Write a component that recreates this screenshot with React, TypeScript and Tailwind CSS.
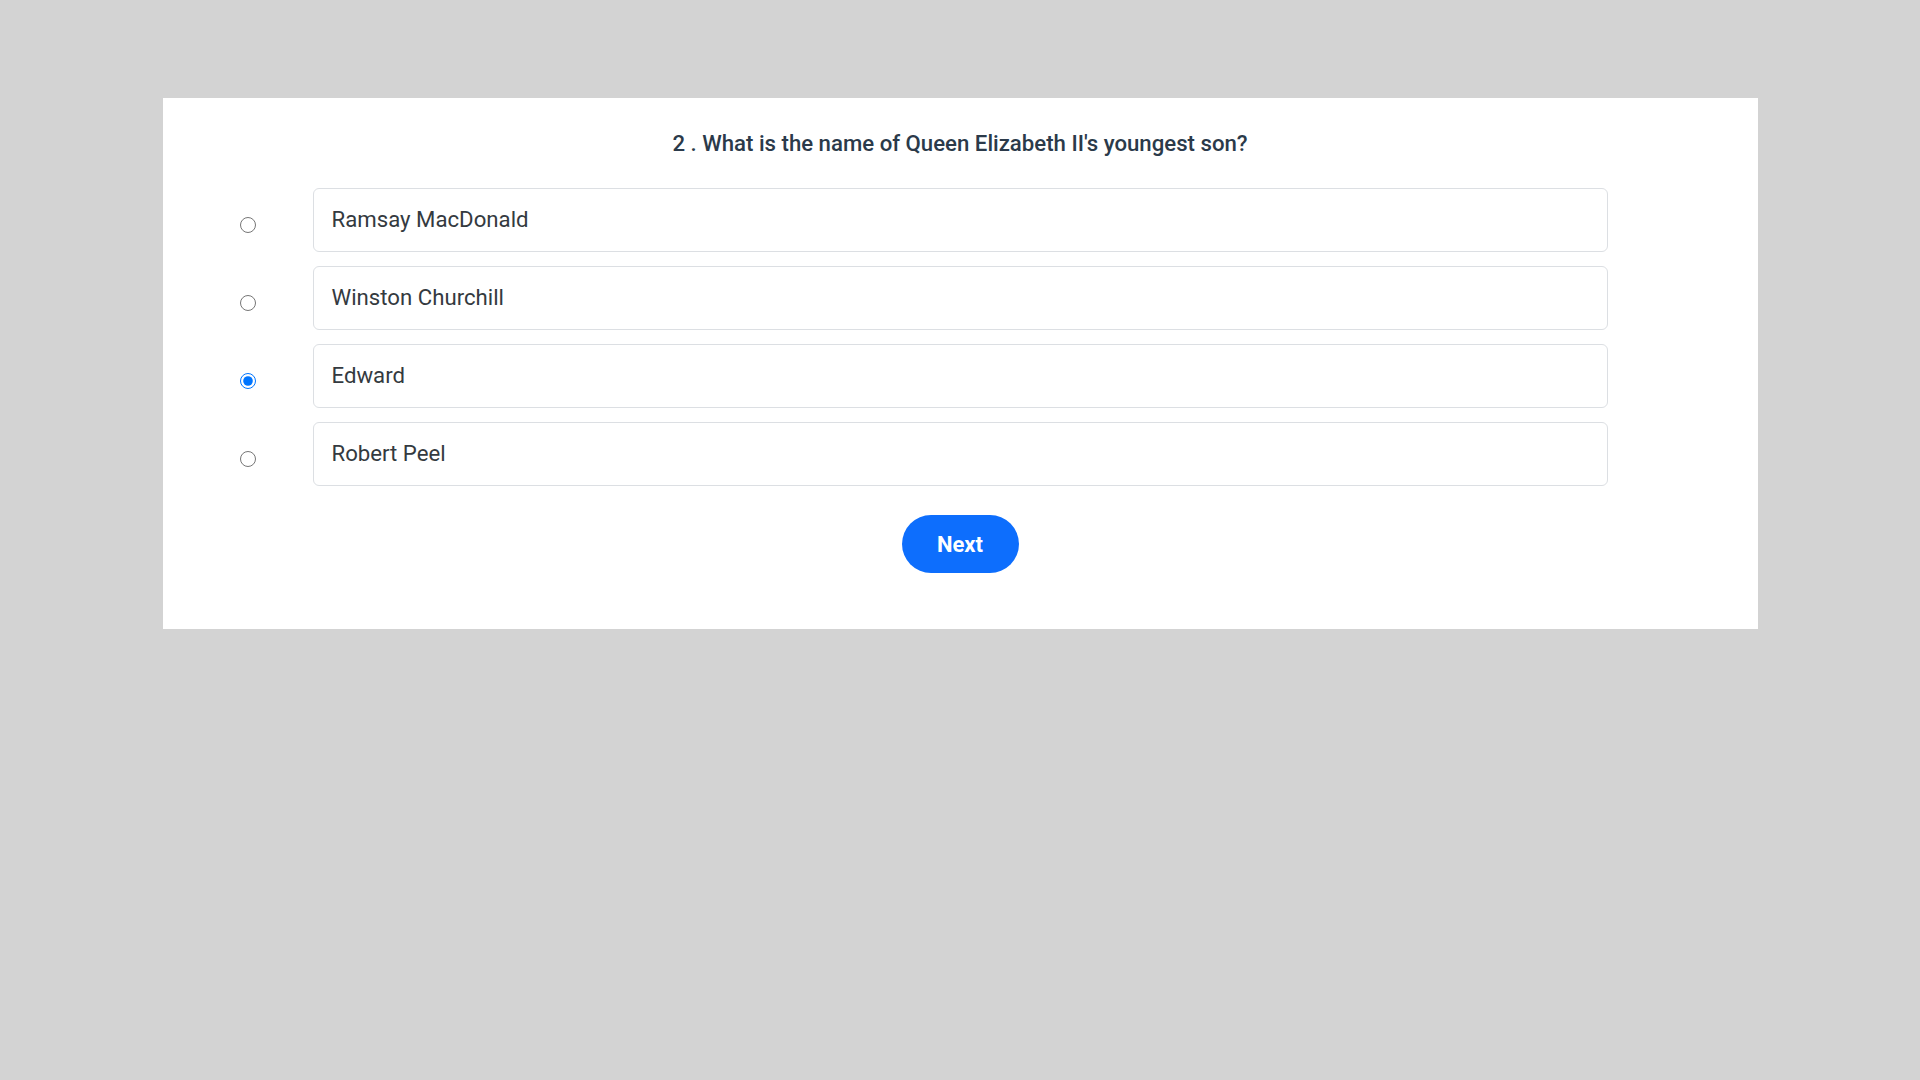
import React, { useState } from 'react';

const options = ['Ramsay MacDonald', 'Winston Churchill', 'Edward', 'Robert Peel'];

const App: React.FC = () => {
  const [selected, setSelected] = useState('Edward');

  return (
    <div className="min-h-screen w-full bg-[#d3d3d3] pt-[98px] font-['Roboto',sans-serif]">
      <div className="mx-auto w-[1595px] bg-white pt-[33px] pb-[56px]">
        <h2 className="text-center text-[22.2px] font-medium leading-[24px] text-[#2b3a4a]">
          2 . What is the name of Queen Elizabeth II's youngest son?
        </h2>

        <div className="mt-[33px] flex flex-col gap-[14px] pl-[77px]">
          {options.map((opt) => (
            <label key={opt} className="flex items-center">
              <input
                type="radio"
                name="answer"
                checked={selected === opt}
                onChange={() => setSelected(opt)}
                className="mt-[10px] mr-[57px] h-[16px] w-[16px] shrink-0"
              />
              <div className="flex h-[64px] w-[1295px] items-center rounded-md border border-[#dcdfe3] px-[18px] text-[22.2px] text-[#343a40]">
                {opt}
              </div>
            </label>
          ))}
        </div>

        <div className="mt-[29px] flex justify-center">
          <button className="h-[58px] w-[117px] rounded-full bg-[#0d6efd] text-[22px] font-bold text-white">
            Next
          </button>
        </div>
      </div>
    </div>
  );
};

export default App;
